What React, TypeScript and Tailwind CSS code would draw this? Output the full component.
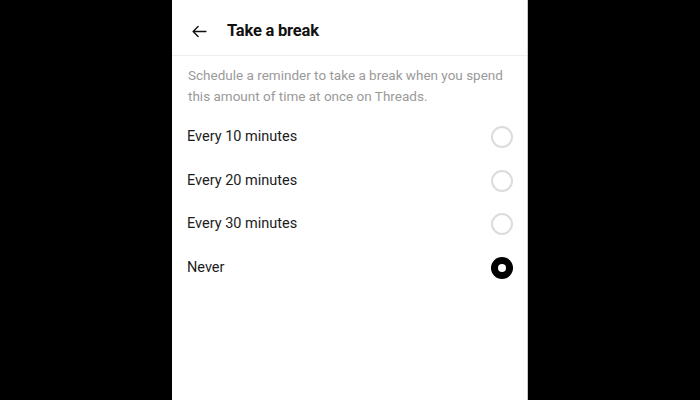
import React, { useState } from 'react';

const options = ['Every 10 minutes', 'Every 20 minutes', 'Every 30 minutes', 'Never'];

export default function App() {
  const [selected, setSelected] = useState('Never');

  return (
    <div className="w-full h-[400px] bg-black flex justify-center font-['Roboto',sans-serif]">
      <div className="w-[356px] h-full bg-white border-r border-[#c8c8c8] flex flex-col">
        {/* Header */}
        <div className="h-[56px] shrink-0 border-b border-[#efefef] flex items-center pt-[8px] pl-[19px]">
          <svg className="w-[17px] h-[17px] text-[#111]" viewBox="0 0 24 24" fill="none" stroke="currentColor" strokeWidth="2">
            <path strokeLinecap="round" strokeLinejoin="round" d="M21 12H3m0 0l7-7m-7 7l7 7" />
          </svg>
          <span className="ml-[19px] text-[16.5px] font-bold text-[#111] tracking-[-0.2px]">Take a break</span>
        </div>

        {/* Description */}
        <p className="pl-4 pr-2 pt-[9px] text-[13.5px] leading-[21px] text-[#9a9a9a]">
          Schedule a reminder to take a break when you spend this amount of time at once on Threads.
        </p>

        {/* Options */}
        <div className="mt-[8px] flex flex-col">
          {options.map((opt) => {
            const isOn = selected === opt;
            return (
              <button
                key={opt}
                onClick={() => setSelected(opt)}
                className="h-[43.7px] flex items-center justify-between pl-[15px] pr-[14px] text-left"
              >
                <span className="text-[14.5px] text-[#1c1c1c]">{opt}</span>
                {isOn ? (
                  <span className="w-[22px] h-[22px] rounded-full bg-black flex items-center justify-center">
                    <span className="w-[8px] h-[8px] rounded-full bg-white" />
                  </span>
                ) : (
                  <span className="w-[22px] h-[22px] rounded-full border-2 border-[#dcdcdc]" />
                )}
              </button>
            );
          })}
        </div>
      </div>
    </div>
  );
}
